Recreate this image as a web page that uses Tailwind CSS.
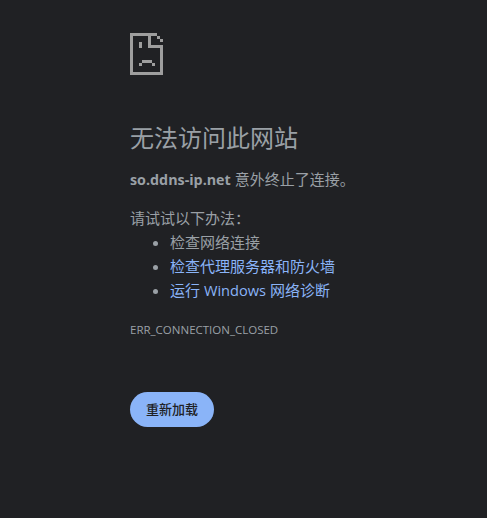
<!DOCTYPE html>
<html lang="zh-CN">
<head>
<meta charset="utf-8">
<script src="https://cdn.jsdelivr.net/npm/@tailwindcss/browser@4"></script>
</head>
<body class="bg-[#202124] h-[518px] overflow-hidden font-['Open_Sans','Noto_Sans_CJK_SC',sans-serif] text-[15px] text-[#9aa0a6]">
<main class="ml-[130px] w-[357px] pt-[33px]">
  <svg class="block" width="33" height="42" viewBox="0 0 33 42" shape-rendering="crispEdges" fill="#9e9e9e">
    <path d="M0 0H27V3H3V39H30V12H33V42H0Z"/>
    <path d="M18 3H21V12H33V15H18Z"/>
    <rect x="27" y="3" width="3" height="3"/>
    <rect x="30" y="6" width="3" height="3"/>
    <rect x="9" y="9" width="3" height="6"/>
    <rect x="12" y="27" width="10" height="3"/>
    <rect x="9" y="30" width="3" height="3"/>
    <rect x="22" y="30" width="3" height="3"/>
  </svg>
  <h1 class="mt-[48px] text-[24px] leading-[30px] font-normal text-[#9aa0a6]">无法访问此网站</h1>
  <p class="mt-[14px] leading-[24px]"><strong class="font-bold text-[14.3px]">so.ddns-ip.net</strong> 意外终止了连接。</p>
  <p class="mt-[14px] leading-[24px]">请试试以下办法：</p>
  <ul class="list-disc pl-[40px] leading-[24px] marker:text-[#9aa0a6]">
    <li>检查网络连接</li>
    <li class="text-[#8ab4f8] marker:text-[#9aa0a6]">检查代理服务器和防火墙</li>
    <li class="text-[#8ab4f8] marker:text-[#9aa0a6]">运行 <span class="text-[14.6px]">Windows</span> 网络诊断</li>
  </ul>
  <div class="mt-[20px] text-[11.5px] leading-[16px]">ERR_CONNECTION_CLOSED</div>
  <button class="mt-[54px] block h-[35px] w-[84px] rounded-full bg-[#8ab4f8] text-[13px] font-medium text-[#202124]">重新加载</button>
</main>
</body>
</html>
